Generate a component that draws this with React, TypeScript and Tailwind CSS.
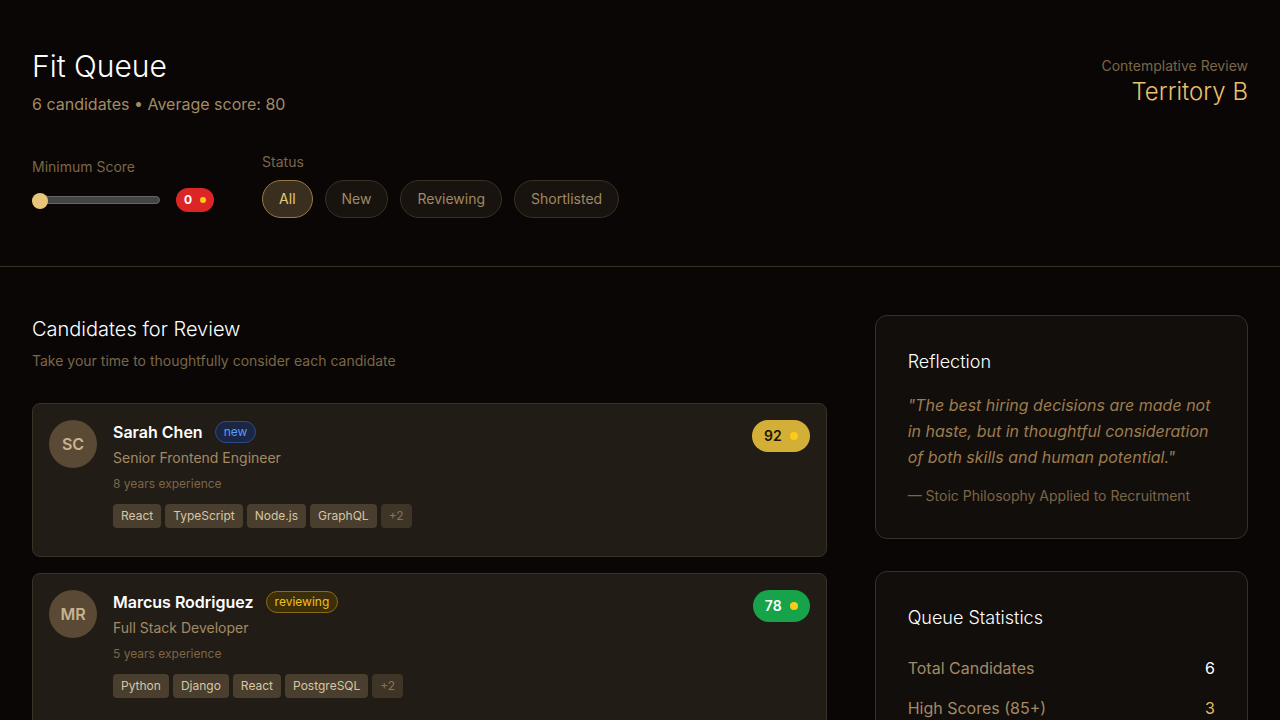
import React from 'react';

type Candidate = {
  initials: string;
  name: string;
  status: 'new' | 'reviewing' | 'shortlisted';
  role: string;
  years: number;
  skills: string[];
  extra: number;
  score: number;
};

const candidates: Candidate[] = [
  {
    initials: 'SC',
    name: 'Sarah Chen',
    status: 'new',
    role: 'Senior Frontend Engineer',
    years: 8,
    skills: ['React', 'TypeScript', 'Node.js', 'GraphQL'],
    extra: 2,
    score: 92,
  },
  {
    initials: 'MR',
    name: 'Marcus Rodriguez',
    status: 'reviewing',
    role: 'Full Stack Developer',
    years: 5,
    skills: ['Python', 'Django', 'React', 'PostgreSQL'],
    extra: 2,
    score: 78,
  },
  {
    initials: 'AP',
    name: 'Aisha Patel',
    status: 'shortlisted',
    role: 'Backend Engineer',
    years: 6,
    skills: ['Go', 'Kubernetes', 'AWS', 'Redis'],
    extra: 1,
    score: 88,
  },
];

function StatusBadge({ status }: { status: Candidate['status'] }) {
  if (status === 'new') {
    return (
      <span className="px-2 py-0.5 rounded-full text-xs border border-[#2b4a8c] bg-[#1a2644] text-[#5b9cf5]">
        new
      </span>
    );
  }
  if (status === 'reviewing') {
    return (
      <span className="px-2 py-0.5 rounded-full text-xs border border-[#8a6a14] bg-[#3c2e08] text-[#f0c020]">
        reviewing
      </span>
    );
  }
  return (
    <span className="px-2 py-0.5 rounded-full text-xs border border-[#1f6b3a] bg-[#0f2e1a] text-[#4ade80]">
      shortlisted
    </span>
  );
}

function ScoreBadge({ score }: { score: number }) {
  const high = score >= 85;
  return (
    <div
      className={
        high
          ? 'flex items-center gap-2 rounded-full px-3 py-1.5 text-sm font-semibold bg-[#d4af37] text-[#1a1408]'
          : 'flex items-center gap-2 rounded-full px-3 py-1.5 text-sm font-semibold bg-[#16a34a] text-white'
      }
    >
      {score}
      <span className="w-2 h-2 rounded-full bg-[#facc15]" />
    </div>
  );
}

function CandidateCard({ c }: { c: Candidate }) {
  return (
    <div className="rounded-lg border border-[#3b3226] bg-[#221c16] px-4 pt-4 pb-7 flex gap-4">
      <div className="w-12 h-12 rounded-full bg-[#5a4a35] flex items-center justify-center text-[#c9b28f] font-semibold shrink-0">
        {c.initials}
      </div>
      <div className="flex-1">
        <div className="flex items-center gap-3">
          <span className="text-white font-semibold">{c.name}</span>
          <StatusBadge status={c.status} />
        </div>
        <div className="mt-1 text-sm text-[#a38a64]">{c.role}</div>
        <div className="mt-2 text-xs text-[#7b6647]">{c.years} years experience</div>
        <div className="mt-3 flex gap-1">
          {c.skills.map((s) => (
            <span key={s} className="px-2 py-1 rounded text-xs bg-[#4a3e2e] text-[#d6c6a6]">
              {s}
            </span>
          ))}
          <span className="px-2 py-1 rounded text-xs bg-[#3f3527] text-[#85745a]">+{c.extra}</span>
        </div>
      </div>
      <div className="self-start">
        <ScoreBadge score={c.score} />
      </div>
    </div>
  );
}

export default function App() {
  const pills = ['All', 'New', 'Reviewing', 'Shortlisted'];

  return (
    <div className="min-h-screen bg-[#090605] text-white font-['Inter',_'Noto_Sans',_sans-serif]">
      {/* Header */}
      <header className="px-8 py-12 border-b border-[#3a3022]">
        <div className="flex items-center justify-between">
          <div>
            <h1 className="text-3xl font-light text-white">Fit Queue</h1>
            <p className="mt-2 text-[#a38a64]">6 candidates • Average score: 80</p>
          </div>
          <div className="text-right">
            <div className="text-sm text-[#7b6647]">Contemplative Review</div>
            <div className="text-2xl font-light text-[#e8c070]">Territory B</div>
          </div>
        </div>

        {/* Filters */}
        <div className="mt-9 flex items-end gap-12">
          <div className="flex flex-col">
            <label className="mb-1 text-sm text-[#7b6647]">Minimum Score</label>
            <div className="h-[37px] flex items-center gap-4">
              <div className="relative w-32 h-2 rounded-full bg-[#444] border border-[#666]">
                <div className="absolute -left-px -top-1 w-4 h-4 rounded-full bg-[#e8c57a]" />
              </div>
              <div className="flex items-center gap-2 rounded-full bg-[#dc2626] px-2 h-6 text-xs font-bold text-white">
                0
                <span className="w-1.5 h-1.5 rounded-full bg-[#facc15]" />
              </div>
            </div>
          </div>
          <div className="flex flex-col">
            <label className="text-sm text-[#7b6647]">Status</label>
            <div className="mt-2 flex gap-3">
              {pills.map((p, i) => (
                <button
                  key={p}
                  className={
                    i === 0
                      ? 'px-4 py-2 rounded-full text-sm border border-[#9a7a40] bg-[#3a2f1e] text-[#e8c878]'
                      : 'px-4 py-2 rounded-full text-sm border border-[#3a3024] bg-[#18130f] text-[#a08862]'
                  }
                >
                  {p}
                </button>
              ))}
            </div>
          </div>
        </div>
      </header>

      {/* Main */}
      <main className="px-8 py-12 grid grid-cols-3 gap-12">
        <section className="col-span-2">
          <h2 className="text-xl font-light text-white">Candidates for Review</h2>
          <p className="mt-2 text-sm text-[#7b6647]">Take your time to thoughtfully consider each candidate</p>
          <div className="mt-8 space-y-4">
            {candidates.map((c) => (
              <CandidateCard key={c.name} c={c} />
            ))}
          </div>
        </section>

        <aside className="space-y-8">
          <div className="rounded-xl border border-[#3a3024] bg-[#120e0b] p-8">
            <h3 className="text-lg font-light text-white">Reflection</h3>
            <p className="mt-4 italic leading-relaxed text-[#9c7c50]">
              "The best hiring decisions are made not in haste, but in thoughtful consideration of both skills and human potential."
            </p>
            <p className="mt-4 text-sm text-[#7b6647]">— Stoic Philosophy Applied to Recruitment</p>
          </div>

          <div className="rounded-xl border border-[#3a3024] bg-[#120e0b] p-8">
            <h3 className="text-lg font-light text-white">Queue Statistics</h3>
            <div className="mt-6 space-y-4">
              <div className="flex justify-between">
                <span className="text-[#a38a64]">Total Candidates</span>
                <span className="text-white">6</span>
              </div>
              <div className="flex justify-between">
                <span className="text-[#a38a64]">High Scores (85+)</span>
                <span className="text-[#e8b860]">3</span>
              </div>
              <div className="flex justify-between">
                <span className="text-[#a38a64]">Shortlisted</span>
                <span className="text-[#4ade80]">1</span>
              </div>
            </div>
          </div>
        </aside>
      </main>
    </div>
  );
}
